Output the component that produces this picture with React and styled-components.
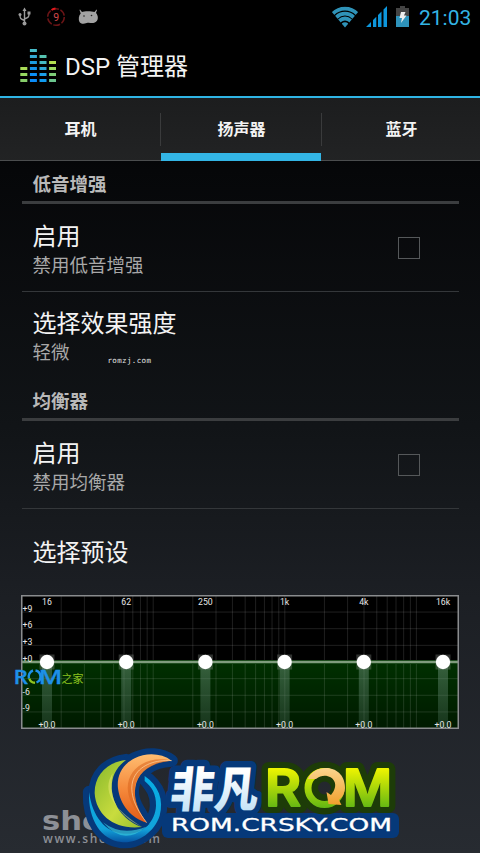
import React, { useState } from 'react'
import styled, { createGlobalStyle } from 'styled-components'


//STYLING
const GlobalStyle = createGlobalStyle`
  * { box-sizing: border-box; }
  body {
    margin: 0;
    background: #000;
    overflow: hidden;
  }
`
const Screen = styled.div`
  position: relative;
  width: 480px;
  height: 853px;
  overflow: hidden;
  display: flex;
  flex-direction: column;
  color: #f3f3f3;
  background: linear-gradient(#000 0, #000 12%, #060709 20%, #111417 50%, #1c1f24 70%, #272b31 100%);
  font-family: Roboto, 'Noto Sans CJK SC', sans-serif;
`
const StatusBar = styled.header`
  height: 33px;
  display: flex;
  justify-content: space-between;
  background: #000;
`
const Clock = styled.span`
  width: 61px;
  font-size: 21px;
  line-height: 36px;
  color: #33b5e5;
`
const StatusRight = styled.div`
  display: flex;
`
const ActionBar = styled.div`
  height: 65px;
  display: flex;
  align-items: center;
  padding: 3px 0 0 20px;
  gap: 9px;
  border-bottom: 2px solid #2fb4e4;
`
const AppTitle = styled.h1`
  margin: 0;
  padding-top: 1px;
  font-size: 24px;
  font-weight: 400;
  line-height: 36px;
`
const Tabs = styled.nav`
  height: 63px;
  display: grid;
  grid-template-columns: 160px 1px 160px 1px 1fr;
  background: linear-gradient(#1c1d1e, #222324);
`
const Tab = styled.button`
  display: flex;
  align-items: center;
  justify-content: center;
  padding: 9px 0 ${props => props.$active ? '0' : '7px'} 1px;
  border: none;
  border-bottom: ${props => props.$active ? '8px solid #33b5e5' : '1px solid #4b4d4e'};
  background: none;
  color: #f3f3f3;
  font: bold 16px/24px Roboto, 'Noto Sans CJK SC', sans-serif;
`
const TabDivider = styled.div`
  height: 63px;
  border-bottom: 1px solid #4b4d4e;
  background: linear-gradient(#3a3b3c, #3a3b3c) 0 15px / 1px 33px no-repeat;
`
const List = styled.main`
  display: flex;
  flex-direction: column;
  padding: 0 21px 0 22px;
`
const SectionHeader = styled.h2`
  margin: 0;
  height: ${props => props.$height}px;
  padding: 0 10.5px 2px;
  display: flex;
  align-items: flex-end;
  border-bottom: 3px solid #3b3d3f;
  font-size: 18.5px;
  font-weight: 700;
  line-height: 28px;
  color: #b9b9b9;
`
const Row = styled.div`
  height: ${props => props.$height}px;
  padding: 0 39px 0 10.5px;
  display: flex;
  align-items: center;
  justify-content: space-between;
  border-bottom: ${props => props.$divider ? '1px solid #34373a' : 'none'};
`
const RowText = styled.div`
  display: flex;
  flex-direction: column;
  padding-top: ${props => props.$top}px;
`
const RowTitle = styled.span`
  font-size: 24px;
  line-height: 31px;
`
const RowSummary = styled.span`
  font-size: 18.5px;
  line-height: 27px;
  color: #a8a8a8;
`
const CheckBox = styled.button`
  width: 22px;
  height: 22px;
  padding: 0;
  border: 1px solid ${props => props.$checked ? '#33b5e5' : '#55585a'};
  background: ${props => props.$checked ? '#33b5e5' : 'none'};
`
const Chart = styled.svg`
  display: block;
  margin-left: -1px;
`
const Watermark = styled.svg`
  position: absolute;
  left: 0;
  top: 0;
  pointer-events: none;
`

//Small icons in the status bar
const NotificationIcons = () => (
  <svg width="110" height="33" viewBox="0 0 110 33">
    <g stroke="#9c9c9c" strokeWidth="1.4" fill="none">
      <path d="M24.5 10v13M24.5 20.5c-4-1.5-4.5-2-4.5-5.5M24.5 19c4-1.5 4.5-2 4.5-5" />
    </g>
    <path d="M24.5 7.5l2 3.5h-4z" fill="#9c9c9c" />
    <circle cx="24.5" cy="23.5" r="2" fill="#9c9c9c" />
    <circle cx="20" cy="14.5" r="1.5" fill="#9c9c9c" />
    <path d="M27.5 11.5h3v3h-3z" fill="#9c9c9c" />
    <circle cx="56" cy="17" r="8.3" fill="none" stroke="#6b1416" strokeWidth="1.5" strokeDasharray="7 1.7" />
    <path d="M51.5 10a8.3 8.3 0 0 1 4-1.5" stroke="#e0181c" strokeWidth="1.8" fill="none" />
    <text x="56.3" y="20.8" fontSize="10.5" textAnchor="middle" fill="#d0484b">9</text>
    <path d="M80 9.500l2 2.500c2-1 9.500-1 12.500 0l2-2.500.5.5-1 3c2.500 2.500 3 8.500-1.800 9.800-3 .6-5-.6-7.500.2-3 1.300-6 1-7.200-1-1.300-2.500-.8-6.500 1.200-8.500l-1.200-3.500z" fill="#a3a3a3" />
    <circle cx="84" cy="16" r=".8" fill="#222" />
    <circle cx="91.5" cy="15.5" r=".8" fill="#222" />
  </svg>
)

const SystemIcons = () => (
  <svg width="89" height="33" viewBox="330 0 89 33">
    <defs>
      <clipPath id="wifi"><path d="M345 27.5L331 11Q345 1.5 359 11z" /></clipPath>
    </defs>
    <g clipPath="url(#wifi)" fill="none" stroke="#2f93b8" strokeWidth="3.8">
      <circle cx="345" cy="26" r="17.3" />
      <circle cx="345" cy="26" r="12.3" />
      <circle cx="345" cy="26" r="7.5" />
      <circle cx="345" cy="26" r="1.9" />
    </g>
    <path d="M366 27l5-5V27zM373 27v-7l3.300-3.300V27zM378 27V15l3.500-3.500V27zM383.500 27V9.500l3.500-3.500v21z" fill="#0d96dc" />
    <path d="M400 6h5v2h4v8h-13V8h4z" fill="#444" />
    <path d="M396 16h13v11h-13z" fill="#2e93bb" />
    <path d="M401 12h4.500l-1.500 3.500h2.500l-5.500 7.500 1-5h-2.500z" fill="#eee" />
  </svg>
)

//Launcher logo, every column is a list of colors from top to bottom
const logoColumns = [
  ['#a9dc57', '#96d960', '#87cd6a'],
  ['#48bcc9', '#34a9d4', '#1c9be0', '#1594ec', '#0b90f5', '#0b8cf8'],
  ['#56c3b0', '#44b9c4', '#30a9d8', '#1ca0e8', '#109bf0'],
  ['#b2e04f', '#9cdb60', '#7dcd78', '#6bc68e'],
]

const AppLogo = () => (
  <svg width="36" height="36" viewBox="0 0 36 36">
    {logoColumns.map((colors, col) => colors.map((color, i) =>
      <rect key={col + '-' + i} x={col * 9.6 + 0.3} y={31 - (colors.length - 1 - i) * 6} width="7" height="3" fill={color} />
    ))}
  </svg>
)

//EQUALIZER
const bands = ['16', '62', '250', '1k', '4k', '16k']
const levels = [9, 6, 3, 0, -3, -6, -9]
const labeledLevels = [9, 6, 3, 0, -6, -9]
const gridFrequencies = []
for (let decade = 10; decade <= 10000; decade *= 10) {
  for (let n = 1; n < 10; n++) {
    if (decade * n <= 16000) gridFrequencies.push(decade * n)
  }
}
const freqToX = (f) => 132.2 + 131.6 * Math.log10(f / 100)
const levelToY = (db) => 67 - db * 5.55

const Equalizer = () => {
  const [gains] = useState(bands.map(() => 0))

  return <Chart width="438" height="134" viewBox="0 0 438 134">
    <defs>
      <linearGradient id="fill" x1="0" y1="0" x2="0" y2="1">
        <stop offset="0" stopColor="#003000" />
        <stop offset="1" stopColor="#001a00" />
      </linearGradient>
      <linearGradient id="bar" x1="0" y1="0" x2="0" y2="1">
        <stop offset="0" stopColor="#6f957d" stopOpacity=".5" />
        <stop offset="1" stopColor="#41664e" stopOpacity=".35" />
      </linearGradient>
    </defs>
    <rect x="1" y="1" width="436" height="132" fill="#000" />
    <rect x="1" y="67" width="436" height="66" fill="url(#fill)" />
    <g stroke="#fff" strokeOpacity=".12">
      {gridFrequencies.map(f => <line key={f} x1={freqToX(f)} x2={freqToX(f)} y1="1" y2="133" />)}
      {levels.map(db => <line key={db} x1="1" x2="437" y1={levelToY(db)} y2={levelToY(db)} />)}
    </g>
    <rect x="1" y="65" width="436" height="4" fill="#1f4d1f" />
    <rect x="1" y="66" width="436" height="2" fill="#7f9c7d" />
    <rect x=".75" y=".75" width="436.5" height="132.5" fill="none" stroke="#8a8c8e" strokeWidth="1.5" />
    <g fill="#e6e6e6" fontSize="8.7">
      {labeledLevels.map(db =>
        <text key={db} x="1.5" y={levelToY(db) - 0.5}>{db < 0 ? db : '+' + db}</text>
      )}
      {bands.map((band, i) => {
        const x = 26 + i * 79.2
        const y = levelToY(gains[i])
        return <g key={band} textAnchor="middle">
          <rect x={x - 5} y={y} width="10" height={132 - y} fill="url(#bar)" />
          <rect x={x - 7.5} y={y - 7.5} width="15" height="15" fill="#8b938b" fillOpacity=".35" />
          <circle cx={x} cy={y} r="7.2" fill="#fff" />
          <text x={x} y="9.5">{band}</text>
          <text x={x} y="132.5">+{gains[i].toFixed(1)}</text>
        </g>
      })}
    </g>
  </Chart>
}

//WATERMARKS
const greenLeaf = 'M144 45C85 52 49 92 50 145C54 212 112 256 192 246C145 230 106 190 101 132C100 92 117 65 144 45z'
const orangeLeaf = 'M281 47C250 24 205 22 170 40C130 60 116 95 120 130C126 180 160 220 206 233C182 200 166 165 172 128C178 82 220 50 281 47z'
const ring = 'M200 93C242 122 258 165 245 212C228 265 175 296 130 291C70 285 30 225 33 141C43 215 82 262 137 266C190 272 232 232 234 182C235 145 220 125 200 108z'

const Watermarks = () => (
  <Watermark width="480" height="853" viewBox="0 0 480 853">
    <defs>
      <linearGradient id="lime" x1="0" y1="0" x2="1" y2="1">
        <stop offset="0" stopColor="#86b82c" /><stop offset=".6" stopColor="#c9dc3e" /><stop offset="1" stopColor="#94be2e" />
      </linearGradient>
      <linearGradient id="orange" x1="0" y1="0" x2="0" y2="1">
        <stop offset="0" stopColor="#ffbd70" /><stop offset=".5" stopColor="#f58a3c" /><stop offset="1" stopColor="#e25a16" />
      </linearGradient>
      <linearGradient id="cyan" x1="0" y1="0" x2="0" y2="1">
        <stop offset="0" stopColor="#06aee6" /><stop offset=".8" stopColor="#12a3da" /><stop offset="1" stopColor="#0654a4" />
      </linearGradient>
      <linearGradient id="ice" x1="0" y1="0" x2="0" y2="1">
        <stop offset=".3" stopColor="#fff" /><stop offset="1" stopColor="#b5dcf5" />
      </linearGradient>
      <linearGradient id="rom" gradientUnits="userSpaceOnUse" x1="0" y1="768" x2="0" y2="809">
        <stop offset="0" stopColor="#f0f500" /><stop offset="1" stopColor="#5fb514" />
      </linearGradient>
      <linearGradient id="gold" x1="0" y1="0" x2="0" y2="1">
        <stop offset="0" stopColor="#fbd58e" /><stop offset="1" stopColor="#f0a02c" />
      </linearGradient>
    </defs>

    <text x="107.5" y="362.5" fontFamily="DejaVu Sans Mono" fontSize="7.5" textLength="43.5" fill="#e4e4e4">romzj.com</text>

    <g fontFamily="Open Sans" fontWeight="600" fontSize="20" fill="#1e90e8" stroke="#1e90e8" strokeWidth=".3">
      <text x="13.5" y="684" textLength="14.5" lengthAdjust="spacingAndGlyphs">R</text>
      <text x="38.5" y="684" textLength="24" lengthAdjust="spacingAndGlyphs">M</text>
    </g>
    <path d="M33 670.5a6.3 6.3 0 0 0-4 8M35.5 670.5a6.3 6.3 0 0 1 1 12" stroke="#1e90e8" strokeWidth="2.4" fill="none" />
    <path d="M29.3 678.5q1.200 4 5.700 4.300" stroke="#8fc31f" strokeWidth="2.4" fill="none" />
    <text x="61.500" y="683" fontFamily="Noto Sans CJK SC" fontSize="11" fill="#8dc21f">之家</text>

    <g fill="#8d9096">
      <text x="42" y="830" fontFamily="DejaVu Sans" fontWeight="700" fontSize="27" textLength="104" lengthAdjust="spacingAndGlyphs">shouji</text>
      <text x="43" y="843" fontFamily="Open Sans" fontWeight="600" fontSize="12" textLength="117">www.shouji.com</text>
    </g>

    <g transform="translate(78 745) scale(.33333)">
      <g fill="#06397a" stroke="#06397a" strokeWidth="37" strokeLinejoin="round">
        <path d={ring} />
        <path d={greenLeaf} />
        <path d={orangeLeaf} />
      </g>
      <path d={ring} fill="url(#cyan)" />
      <path d="M192 246C140 258 85 240 60 200C85 268 165 284 215 236z" fill="#06397a" />
      <path d="M75 232Q130 275 205 245Q135 305 75 232" fill="#35c5dd" fillOpacity=".7" />
      <path d={greenLeaf} fill="url(#lime)" />
      <path d="M104 85Q55 160 192 246Q106 205 101 132Q99 105 104 85" fill="#e2e870" fillOpacity=".55" />
      <path d={orangeLeaf} fill="url(#orange)" />
      <path d="M281 47C180 20 85 120 206 233C135 130 175 60 281 47" fill="#d8641e" fillOpacity=".55" />
      <path d="M281 47C185 40 110 110 206 233" fill="none" stroke="#ffd9a8" strokeWidth="2" />
      <path d="M187 116C178 140 184 170 207 197C218 175 210 140 187 116z" fill="#252a31" />
    </g>

    <rect x="162" y="813" width="237" height="25" rx="6" fill="#06397a" />
    <text x="0" y="0" transform="translate(169 807) skewX(-6)" fontFamily="Noto Sans CJK SC" fontWeight="900" fontSize="48" textLength="88" lengthAdjust="spacingAndGlyphs" fill="url(#ice)" stroke="#06397a" strokeWidth="13" strokeLinejoin="round" paintOrder="stroke">非凡</text>
    <text x="171" y="831" fontFamily="DejaVu Sans" fontSize="17" textLength="221" lengthAdjust="spacingAndGlyphs" fill="#fff" stroke="#fff" strokeWidth=".3">ROM.CRSKY.COM</text>

    <g fontFamily="Inter" fontWeight="600" fontSize="51" strokeLinejoin="round">
      <g fill="#1d3c08" stroke="#1d3c08" strokeWidth="14">
        <text x="265" y="806" textLength="36" lengthAdjust="spacingAndGlyphs">R</text>
        <circle cx="324.5" cy="788" r="16.5" strokeWidth="20" fill="none" />
        <text x="343" y="806" textLength="49" lengthAdjust="spacingAndGlyphs">M</text>
      </g>
      <g fill="url(#rom)" stroke="url(#rom)" strokeWidth="2">
        <text x="265" y="806" textLength="36" lengthAdjust="spacingAndGlyphs">R</text>
        <text x="343" y="806" textLength="49" lengthAdjust="spacingAndGlyphs">M</text>
      </g>
    </g>
    <circle cx="324.5" cy="788" r="16.5" fill="none" stroke="url(#rom)" strokeWidth="7" />
    <path d="M308 779C314 763 345 763 345 788Q345 795 339 800L341.500 805 328.500 804 326.500 792 331 795C343 781 327 770 316 779z" fill="url(#gold)" />
  </Watermark>
)


const tabNames = ['耳机', '扬声器', '蓝牙']

const App = () => {
  const [activeTab, setActiveTab] = useState(1)
  const [bassEnabled, setBassEnabled] = useState(false)
  const [eqEnabled, setEqEnabled] = useState(false)

  return <Screen>
    <GlobalStyle />
    <StatusBar>
      <NotificationIcons />
      <StatusRight>
        <SystemIcons />
        <Clock>21:03</Clock>
      </StatusRight>
    </StatusBar>

    <ActionBar>
      <AppLogo />
      <AppTitle>DSP 管理器</AppTitle>
    </ActionBar>

    <Tabs>
      {tabNames.map((name, i) =>
        <React.Fragment key={name}>
          {i > 0 && <TabDivider />}
          <Tab $active={activeTab === i} onClick={() => setActiveTab(i)}>{name}</Tab>
        </React.Fragment>
      )}
    </Tabs>

    <List>
      <SectionHeader $height={43}>低音增强</SectionHeader>
      <Row $height={88} $divider>
        <RowText $top={7}>
          <RowTitle>启用</RowTitle>
          <RowSummary>禁用低音增强</RowSummary>
        </RowText>
        <CheckBox $checked={bassEnabled} onClick={() => setBassEnabled(!bassEnabled)} />
      </Row>
      <Row $height={87}>
        <RowText $top={5}>
          <RowTitle>选择效果强度</RowTitle>
          <RowSummary>轻微</RowSummary>
        </RowText>
      </Row>

      <SectionHeader $height={42}>均衡器</SectionHeader>
      <Row $height={88} $divider>
        <RowText $top={7}>
          <RowTitle>启用</RowTitle>
          <RowSummary>禁用均衡器</RowSummary>
        </RowText>
        <CheckBox $checked={eqEnabled} onClick={() => setEqEnabled(!eqEnabled)} />
      </Row>
      <Row $height={86}>
        <RowText $top={3}>
          <RowTitle>选择预设</RowTitle>
        </RowText>
      </Row>
      <Equalizer />
    </List>

    <Watermarks />
  </Screen>
}

export default App
